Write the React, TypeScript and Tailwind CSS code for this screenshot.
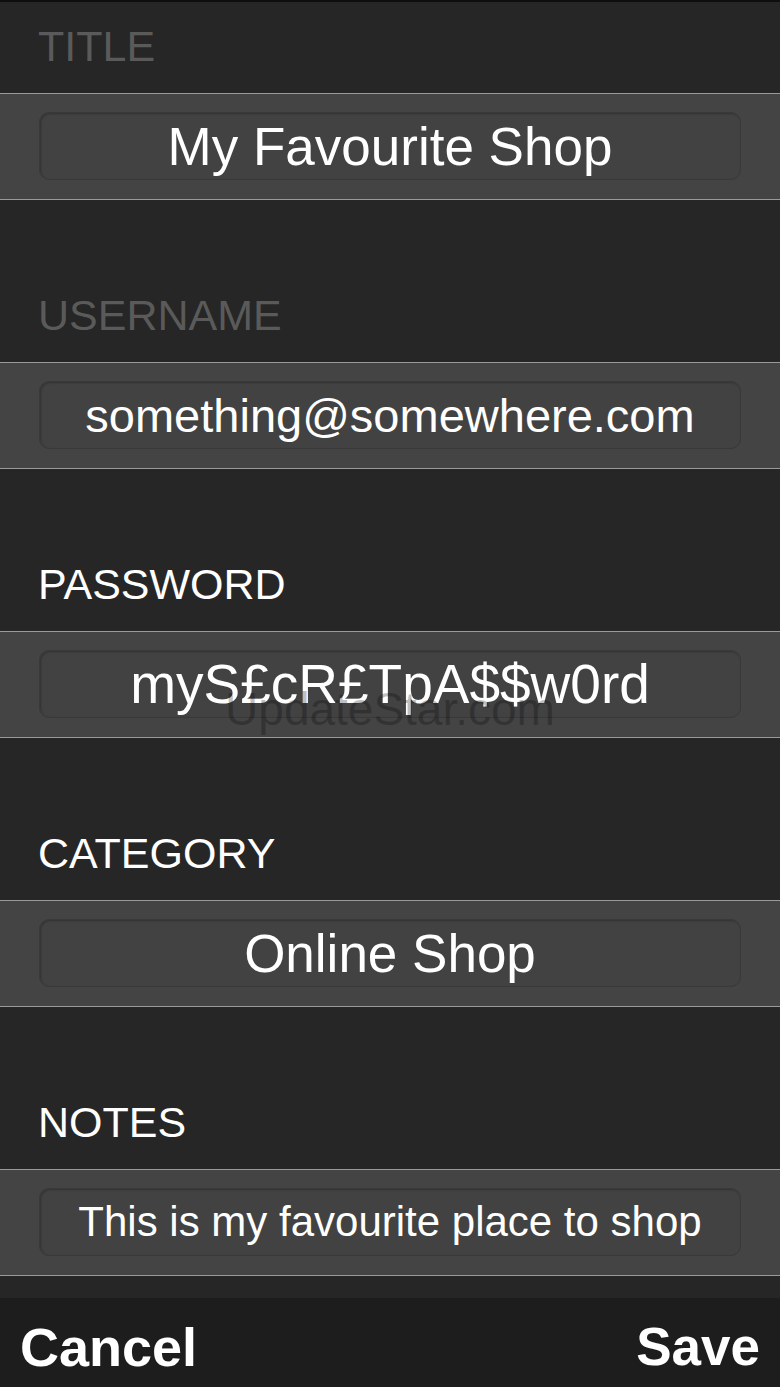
import React from "react";

const fields = [
  { label: "TITLE", value: "My Favourite Shop", dim: true, size: "text-[53px]", first: true },
  { label: "USERNAME", value: "something@somewhere.com", dim: true, size: "text-[47px]" },
  { label: "PASSWORD", value: "myS£cR£TpA$$w0rd", dim: false, size: "text-[55px]", mark: true },
  { label: "CATEGORY", value: "Online Shop", dim: false, size: "text-[53px]" },
  { label: "NOTES", value: "This is my favourite place to shop", dim: false, size: "text-[42px]" },
];

export default function App() {
  return (
    <div
      className="w-[780px] h-[1387px] bg-[#262626] border-t-2 border-[#0e0e0e] flex flex-col overflow-hidden"
      style={{ fontFamily: '"Liberation Sans", Arial, sans-serif' }}
    >
      {fields.map((f) => (
        <div key={f.label}>
          <div
            className={
              "flex items-end px-[38px] pb-[23px] " +
              (f.first ? "h-[91px]" : "h-[162px]")
            }
          >
            <span
              className={
                "text-[43px] leading-[48px] " +
                (f.dim ? "text-[#5a5a5a]" : "text-white")
              }
            >
              {f.label}
            </span>
          </div>
          <div className="relative bg-[#444444] border-y border-[#9a9a9a] h-[107px] px-[39px] pt-[18px]">
            <div className="h-[68px] rounded-[10px] bg-[#424242] border border-[#393939] shadow-[inset_1px_1px_2px_rgba(0,0,0,0.25)] flex items-center justify-center">
              <span className={f.size + " text-white leading-none"}>{f.value}</span>
            </div>
            {f.mark && (
              <span className="absolute left-0 right-0 top-[54px] text-center text-[46px] leading-none text-black/25 pointer-events-none">
                UpdateStar.com
              </span>
            )}
          </div>
        </div>
      ))}
      <div className="h-[22px]" />
      <div className="flex-1 bg-[#1d1d1d] flex items-center justify-between px-[20px] pt-[8px]">
        <span className="text-[54px] font-bold text-white leading-none">Cancel</span>
        <span className="text-[53px] font-bold text-white leading-none">Save</span>
      </div>
    </div>
  );
}
